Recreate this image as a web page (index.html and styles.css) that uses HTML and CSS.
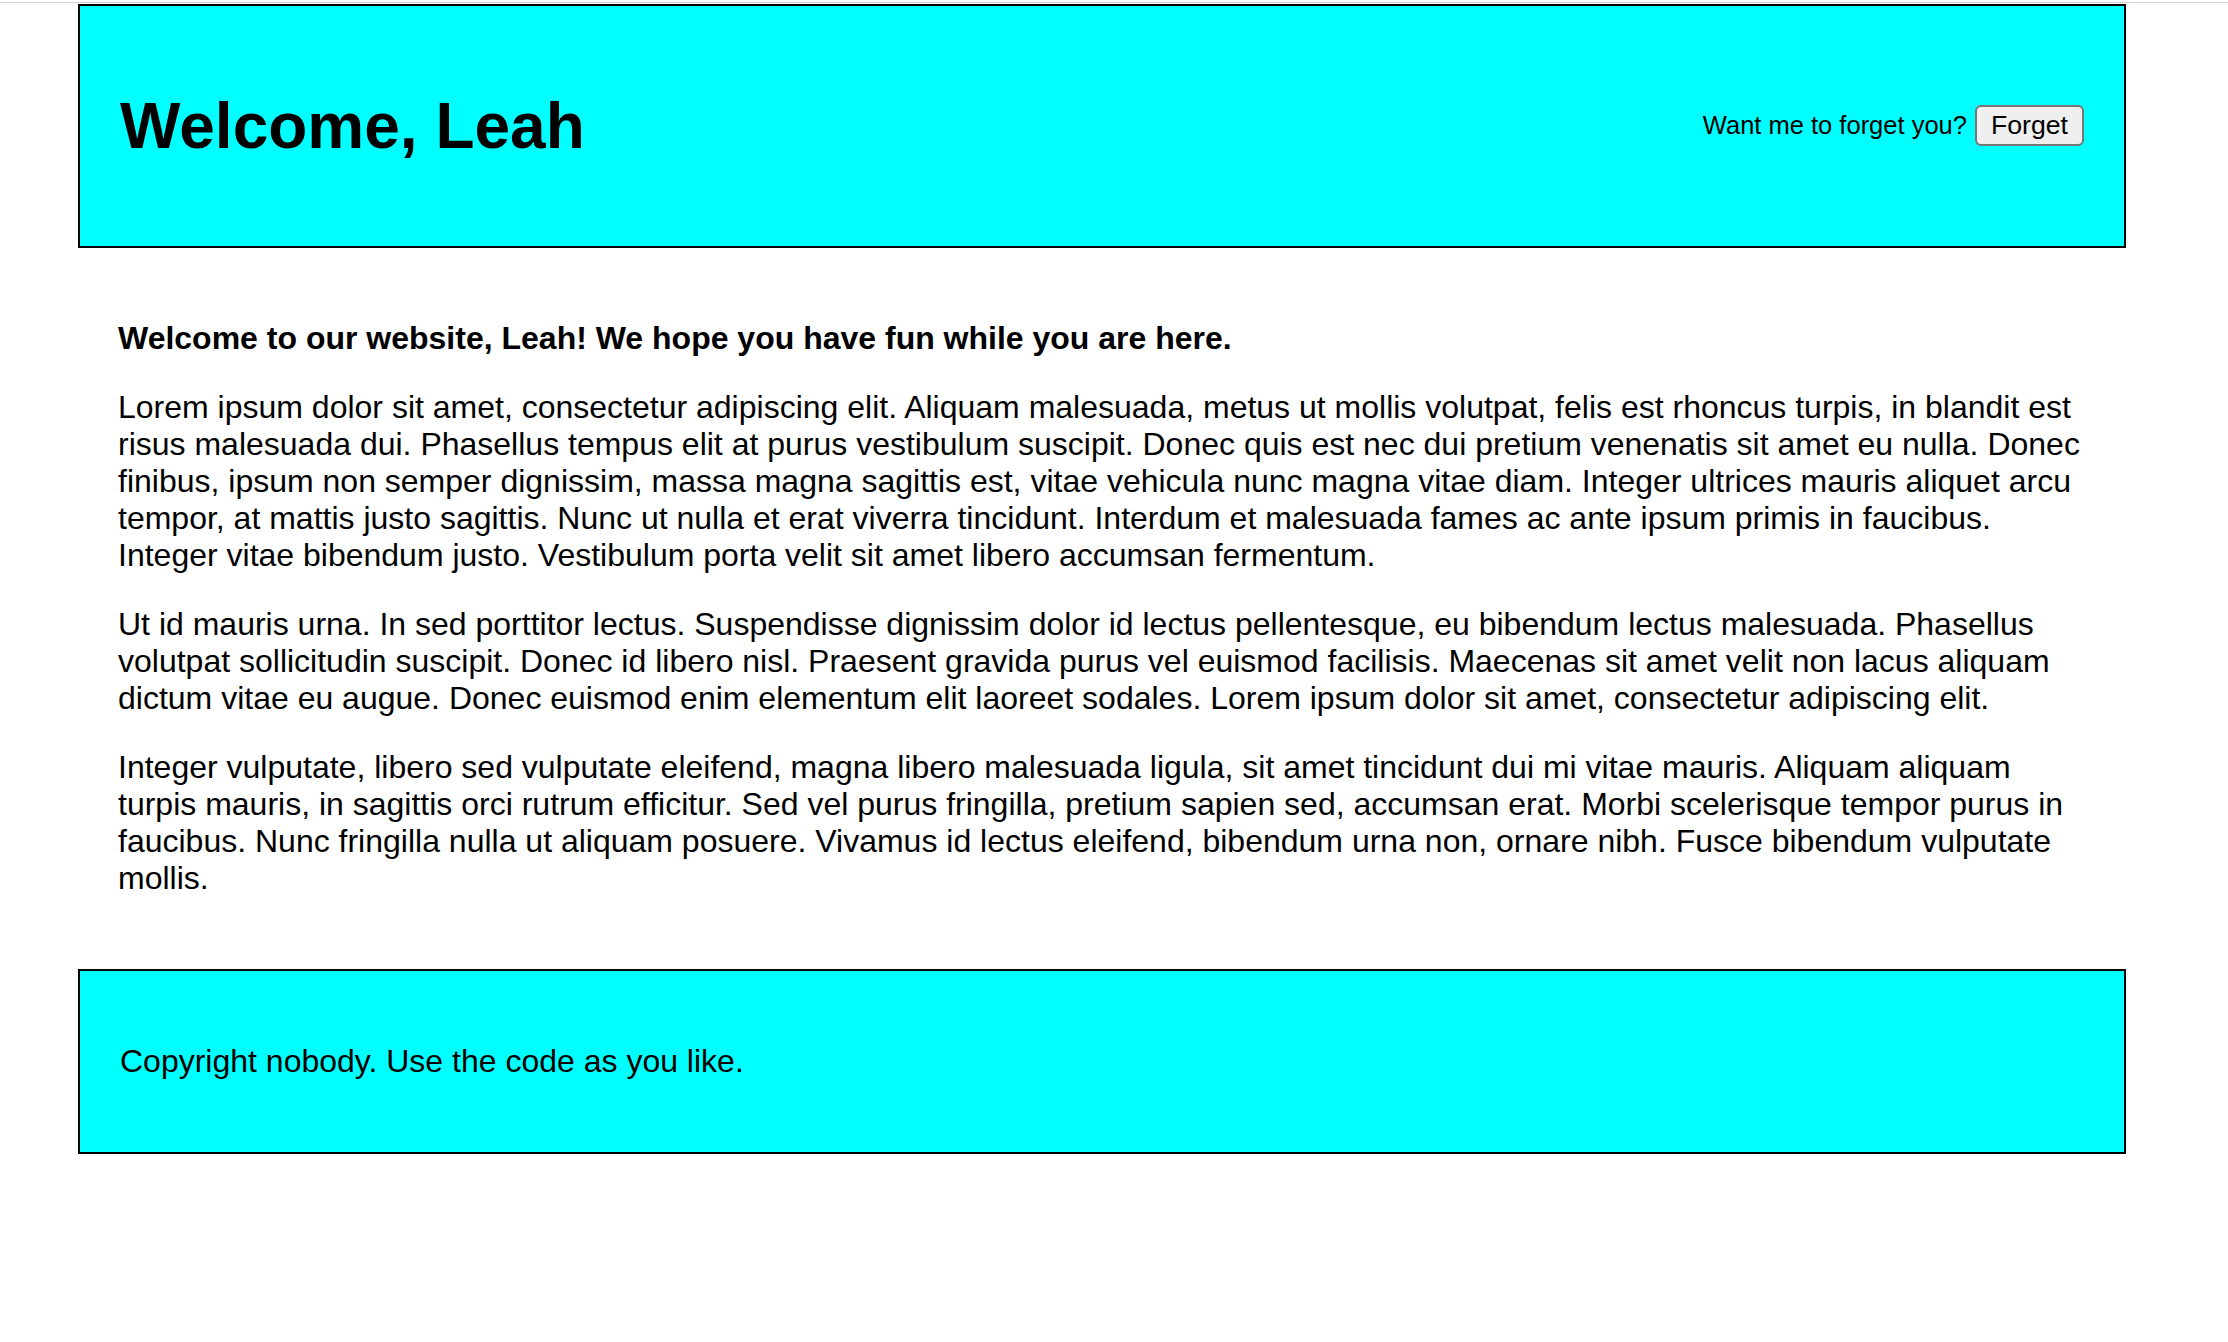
FILE: index.html
```html
<!DOCTYPE html>
<html lang="en">
<head>
<meta charset="utf-8">
<title>Welcome, Leah</title>
<link rel="stylesheet" href="styles.css">
</head>
<body>
<div class="topline"></div>
<div class="page">
  <header class="site-header">
    <h1 class="title">Welcome, Leah</h1>
    <div class="forget">
      <span class="forget-label">Want me to forget you?</span>
      <button class="forget-btn" type="button">Forget</button>
    </div>
  </header>
  <main class="content">
    <p class="lead">Welcome to our website, Leah! We hope you have fun while you are here.</p>
    <p>Lorem ipsum dolor sit amet, consectetur adipiscing elit. Aliquam malesuada, metus ut mollis volutpat, felis est rhoncus turpis, in blandit est risus malesuada dui. Phasellus tempus elit at purus vestibulum suscipit. Donec quis est nec dui pretium venenatis sit amet eu nulla. Donec finibus, ipsum non semper dignissim, massa magna sagittis est, vitae vehicula nunc magna vitae diam. Integer ultrices mauris aliquet arcu tempor, at mattis justo sagittis. Nunc ut nulla et erat viverra tincidunt. Interdum et malesuada fames ac ante ipsum primis in faucibus. Integer vitae bibendum justo. Vestibulum porta velit sit amet libero accumsan fermentum.</p>
    <p>Ut id mauris urna. In sed porttitor lectus. Suspendisse dignissim dolor id lectus pellentesque, eu bibendum lectus malesuada. Phasellus volutpat sollicitudin suscipit. Donec id libero nisl. Praesent gravida purus vel euismod facilisis. Maecenas sit amet velit non lacus aliquam dictum vitae eu augue. Donec euismod enim elementum elit laoreet sodales. Lorem ipsum dolor sit amet, consectetur adipiscing elit.</p>
    <p>Integer vulputate, libero sed vulputate eleifend, magna libero malesuada ligula, sit amet tincidunt dui mi vitae mauris. Aliquam aliquam turpis mauris, in sagittis orci rutrum efficitur. Sed vel purus fringilla, pretium sapien sed, accumsan erat. Morbi scelerisque tempor purus in faucibus. Nunc fringilla nulla ut aliquam posuere. Vivamus id lectus eleifend, bibendum urna non, ornare nibh. Fusce bibendum vulputate mollis.</p>
  </main>
  <footer class="site-footer">
    <p>Copyright nobody. Use the code as you like.</p>
  </footer>
</div>
</body>
</html>
```

FILE: styles.css
```css
html, body {
  margin: 0;
  padding: 0;
  background: #ffffff;
}

body {
  font-family: "Liberation Sans", Helvetica, Arial, sans-serif;
  font-size: 32px;
  color: #000000;
}

.topline {
  margin-top: 2px;
  height: 1px;
  background: #d3d3d3;
}

.page {
  width: 2048px;
  margin: 1px 0 0 78px;
}

.site-header {
  display: flex;
  justify-content: space-between;
  align-items: center;
  background: #00ffff;
  border: 2px solid #000000;
  padding: 40px;
}

.title {
  font-size: 64px;
  font-weight: bold;
  margin: 0.67em 0;
}

.forget {
  display: flex;
  align-items: center;
  gap: 8px;
}

.forget-label {
  font-size: 25.5px;
}

.forget-btn {
  font-family: "Liberation Sans", Helvetica, Arial, sans-serif;
  font-size: 26.67px;
  color: #000000;
  background: #efefef;
  border: 2px solid #767676;
  border-radius: 6px;
  padding: 3px 14px;
  line-height: normal;
}

.content {
  padding: 40px;
}

.content p {
  margin: 32px 0;
}

.lead {
  font-weight: bold;
}

.site-footer {
  background: #00ffff;
  border: 2px solid #000000;
  padding: 40px;
}

.site-footer p {
  margin: 32px 0;
}
```
